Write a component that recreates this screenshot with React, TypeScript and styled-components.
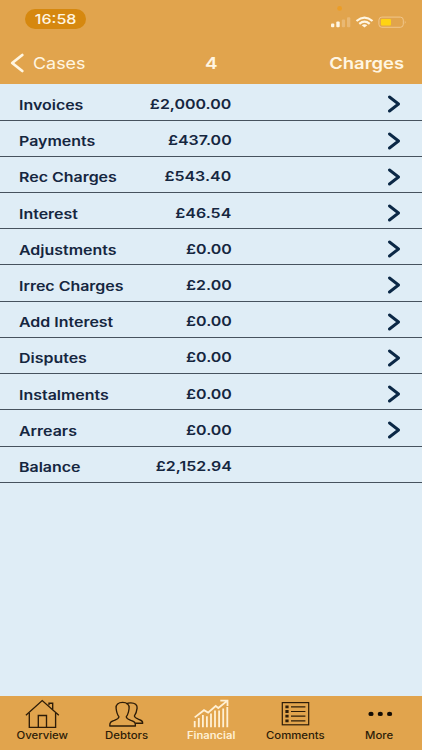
import React from 'react';
import styled, { createGlobalStyle } from 'styled-components';

const GlobalStyle = createGlobalStyle`
  * { box-sizing: border-box; }
  html, body { margin: 0; padding: 0; background: #dfedf6; }
  body { font-family: Inter, 'Liberation Sans', sans-serif; overflow: hidden; }
  svg { display: block; }
`;

const Screen = styled.div`
  display: flex;
  flex-direction: column;
  width: 422px;
  height: 750px;
  background: #dfedf6;
`;

const Wide = styled.span<{ $scale?: number; $origin?: string }>`
  display: inline-block;
  white-space: nowrap;
  transform: scaleX(${p => p.$scale ?? 1.18});
  transform-origin: ${p => p.$origin ?? 'left'} center;
`;

const Header = styled.header`
  height: 84.4px;
  flex: none;
  background: #e1a44d;
  color: #fff6e2;
`;

const StatusBar = styled.div`
  display: flex;
  height: 42px;
  padding: 9px 14px 0 25px;
  justify-content: space-between;
`;

const TimePill = styled.div`
  width: 61px;
  height: 20px;
  border-radius: 10px;
  background: #d6880f;
  font-size: 13.6px;
  font-weight: 500;
  line-height: 20px;
  text-align: center;
`;

const StatusGlyphs = styled.svg`
  overflow: visible;
`;

const NavBar = styled.nav`
  display: grid;
  grid-template-columns: 1fr 40px 1fr;
  align-items: center;
  height: 42px;
  padding: 0 18px 0 10px;
  font-size: 16px;
  line-height: 20px;
`;

const BackLink = styled.div`
  display: flex;
  align-items: center;
  gap: 8px;
`;

const Title = styled.div`
  padding-left: 9px;
  text-align: center;
  font-weight: 600;
`;

const Action = styled.div`
  text-align: right;
  font-weight: 600;
`;

const List = styled.main`
  flex: 1;
`;

const Row = styled.div`
  display: grid;
  grid-template-columns: 121.4px 91.6px 1fr;
  align-items: center;
  height: 36.22px;
  padding: 4.8px 21.5px 0 18.6px;
  border-bottom: 1px solid #46525e;
  color: #15263f;
  font-size: 13.2px;
  font-weight: 600;
  line-height: 18px;
`;

const Label = styled.div`
  padding-top: 1px;
`;

const Amount = styled.div`
  text-align: right;
  margin-top: -1px;
`;

const Chevron = styled.svg`
  justify-self: end;
`;

const TabBar = styled.footer`
  display: grid;
  grid-template-columns: repeat(5, 1fr);
  flex: none;
  height: 54.3px;
  background: #e1a44d;
`;

const Tab = styled.div<{ $active?: boolean }>`
  display: flex;
  flex-direction: column;
  align-items: center;
  padding: 3px ${p => (p.$active ? 0 : 0.6)}px 0 0;
  color: ${p => (p.$active ? '#fff0d4' : '#2d1c08')};
  font-size: 9.8px;
  font-weight: ${p => (p.$active ? 600 : 500)};
  line-height: 12px;
`;

const TabIcon = styled.svg`
  margin-bottom: 1px;
`;

const rows: [string, string][] = [
  ['Invoices', '£2,000.00'],
  ['Payments', '£437.00'],
  ['Rec Charges', '£543.40'],
  ['Interest', '£46.54'],
  ['Adjustments', '£0.00'],
  ['Irrec Charges', '£2.00'],
  ['Add Interest', '£0.00'],
  ['Disputes', '£0.00'],
  ['Instalments', '£0.00'],
  ['Arrears', '£0.00'],
  ['Balance', '£2,152.94'],
];

const StatusIcons = () => (
  <StatusGlyphs width="78" height="28" viewBox="0 0 78 28" fill="none">
    <circle cx="9.6" cy="-0.6" r="2.4" fill="#ec9d26" />
    <rect x="1" y="14.4" width="3.3" height="3.8" rx="1" fill="#fff6e2" />
    <rect x="6.3" y="12.4" width="3.4" height="5.8" rx="1" fill="#fff6e2" />
    <rect x="11.8" y="10.4" width="3.3" height="7.8" rx="1" fill="#e9b873" />
    <rect x="17" y="8.2" width="3.3" height="10" rx="1" fill="#e9b873" />
    <g stroke="#fff6e2" strokeWidth="2.2">
      <path d="M26.5 12Q34.5 5.2 42.5 12" />
      <path d="M29.3 14.8Q34.5 10.5 39.7 14.8" />
    </g>
    <path d="M31.7 16.2Q34.5 14.2 37.3 16.2L34.5 18.5Z" fill="#fff6e2" />
    <rect x="48.9" y="8.1" width="24.4" height="10.2" rx="3" stroke="#f0c68c" strokeWidth="1" />
    <rect x="51" y="10" width="10" height="6.6" rx="1" fill="#ffd313" />
    <path d="M74.8 11.4Q76.6 13.2 74.8 15Z" fill="#f0c68c" />
  </StatusGlyphs>
);

const HouseIcon = () => (
  <TabIcon width="36" height="30" viewBox="0 0 36 30" fill="none" stroke="currentColor" strokeWidth="1.35">
    <path d="M1.9 16.2L18.2 1.6L34.8 16.2" />
    <path d="M5.3 14V28.3H31.6V14" />
    <path d="M14.3 28.3V16.5H22.5V28.3M25 6.3V4.2H28.7V10.5" />
  </TabIcon>
);

const PeopleIcon = () => (
  <TabIcon width="36" height="30" viewBox="0 0 36 30" fill="none" stroke="currentColor" strokeWidth="1.35" strokeLinejoin="round">
    <path d="M1.8 27C1.6 23.4 2.8 22.6 6.2 21.4C9.2 20.2 11 19.7 10.9 17.6C9.1 15.5 8.5 12.8 8.1 9.2C7.7 5.5 10.3 3.4 14.6 3.4S21.5 5.5 21.1 9.2C20.7 12.8 20.1 15.5 18.3 17.6C18.2 19.7 20 20.2 23 21.4C26.4 22.6 27.6 23.4 27.4 27Z" />
    <path d="M18.4 4.9C19.6 4 21.2 3.8 22.8 3.8C26.9 3.8 29.5 5.8 29.1 9.2C28.7 12.5 28 15 26.4 16.9C26.3 18.6 27.7 19.2 30.3 20.2C33.4 21.3 34.8 21.7 34.7 24.2H27.2" />
  </TabIcon>
);

const ChartIcon = () => (
  <TabIcon width="36" height="30" viewBox="0 0 36 30" fill="none" stroke="currentColor">
    <path strokeWidth="1.8" d="M1.7 28.3V22M5.8 28.3V19M9.9 28.3V16M13.9 28.3V17.3M18 28.3V14.6M22 28.3V11.6M26.1 28.3V11.6M30.2 28.3V9.5M34.3 28.3V8" />
    <path strokeWidth="1.8" d="M1.7 18.4L11 11.2L15.1 13.6L22.7 7L25.3 9L34.2 1.9M27.3 1.7H34.5V7" />
  </TabIcon>
);

const ListIcon = () => (
  <TabIcon width="36" height="30" viewBox="0 0 36 30" fill="none" stroke="currentColor">
    <rect x="5.3" y="3.6" width="26.4" height="22.2" strokeWidth="1.2" />
    <path strokeWidth="1.2" d="M14 7.8H28.4M14 12.5H28.4M14 17.2H28.4M14 21.9H28.4" />
    <path strokeWidth="2.8" d="M8.4 7.8H11.6M8.4 12.5H11.6M8.4 17.2H11.6M8.4 21.9H11.6" />
  </TabIcon>
);

const DotsIcon = () => (
  <TabIcon width="36" height="30" viewBox="0 0 36 30" fill="#140d05">
    <ellipse cx="9" cy="14.9" rx="2.6" ry="2.2" />
    <ellipse cx="18.3" cy="14.9" rx="2.6" ry="2.2" />
    <ellipse cx="27.6" cy="14.9" rx="2.6" ry="2.2" />
  </TabIcon>
);

const tabs = [
  { name: 'Overview', Icon: HouseIcon },
  { name: 'Debtors', Icon: PeopleIcon },
  { name: 'Financial', Icon: ChartIcon },
  { name: 'Comments', Icon: ListIcon },
  { name: 'More', Icon: DotsIcon },
];

export default function App() {
  return (
    <Screen>
      <GlobalStyle />
      <Header>
        <StatusBar>
          <TimePill><Wide $origin="center">16:58</Wide></TimePill>
          <StatusIcons />
        </StatusBar>
        <NavBar>
          <BackLink>
            <svg width="15" height="20" viewBox="0 0 15 20" fill="none" stroke="currentColor" strokeWidth="2.8" strokeLinecap="round" strokeLinejoin="round">
              <path d="M12.3 2L2.2 10L12.3 18" />
            </svg>
            <Wide $scale={1.12}>Cases</Wide>
          </BackLink>
          <Title><Wide $origin="center">4</Wide></Title>
          <Action><Wide $origin="right" $scale={1.15}>Charges</Wide></Action>
        </NavBar>
      </Header>
      <List>
        {rows.map(([label, amount], i) => (
          <Row key={label}>
            <Label><Wide $scale={1.21}>{label}</Wide></Label>
            <Amount><Wide $origin="right" $scale={1.21}>{amount}</Wide></Amount>
            {i < rows.length - 1 && (
              <Chevron width="14" height="18" viewBox="0 0 14 18" fill="none" stroke="#0b2846" strokeWidth="2.9" strokeLinecap="round" strokeLinejoin="round">
                <path d="M2.5 2L11.5 9L2.5 16" />
              </Chevron>
            )}
          </Row>
        ))}
      </List>
      <TabBar>
        {tabs.map(({ name, Icon }) => (
          <Tab key={name} $active={name === 'Financial'}>
            <Icon />
            <Wide $origin="center" $scale={name === 'Financial' ? 1.14 : 1.16}>{name}</Wide>
          </Tab>
        ))}
      </TabBar>
    </Screen>
  );
}
